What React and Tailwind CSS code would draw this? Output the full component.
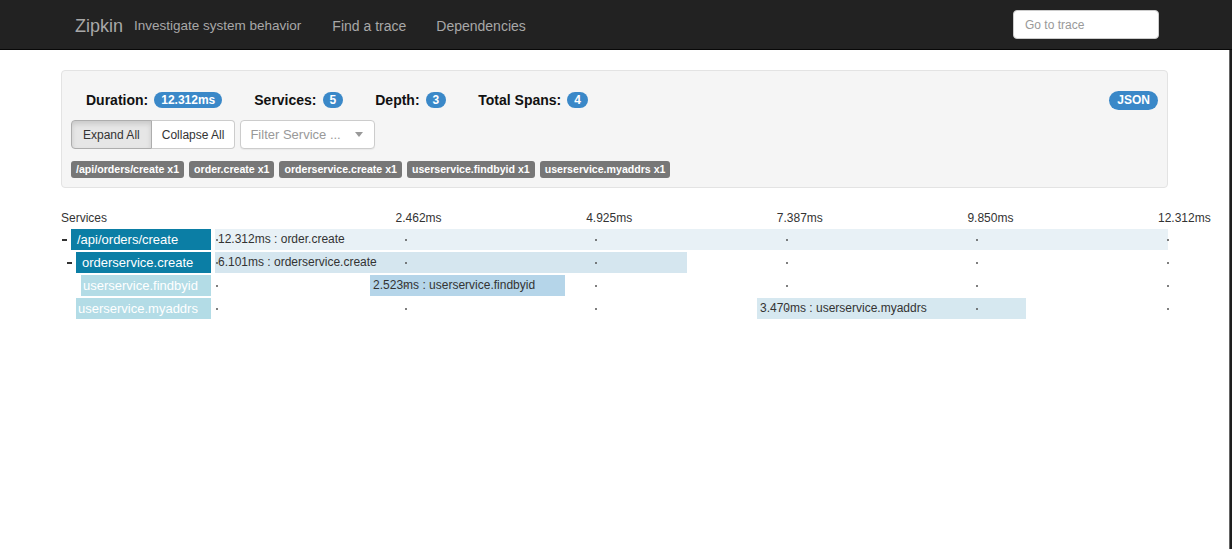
import React from "react";

const TICKS = [
  { pct: 20, label: "2.462ms" },
  { pct: 40, label: "4.925ms" },
  { pct: 60, label: "7.387ms" },
  { pct: 80, label: "9.850ms" },
  { pct: 100, label: "12.312ms" },
];

const SPANS = [
  {
    name: "/api/orders/create",
    label: "12.312ms : order.create",
    indent: "pl-[1px]",
    dash: true,
    dark: true,
    left: 0,
    width: 100,
    bar: "bg-[#e8f1f6]",
  },
  {
    name: "orderservice.create",
    label: "6.101ms : orderservice.create",
    indent: "pl-[6px]",
    dash: true,
    dark: true,
    left: 0,
    width: 49.55,
    bar: "bg-[#d5e6ef]",
  },
  {
    name: "userservice.findbyid",
    label: "2.523ms : userservice.findbyid",
    indent: "pl-[20px]",
    dash: false,
    dark: false,
    left: 16.27,
    width: 20.49,
    bar: "bg-[#b5d5e9]",
  },
  {
    name: "userservice.myaddrs",
    label: "3.470ms : userservice.myaddrs",
    indent: "pl-[15px]",
    dash: false,
    dark: false,
    left: 56.87,
    width: 28.18,
    bar: "bg-[#d6e8f0]",
  },
];

const TAGS = [
  "/api/orders/create x1",
  "order.create x1",
  "orderservice.create x1",
  "userservice.findbyid x1",
  "userservice.myaddrs x1",
];

function Badge({ children, className = "" }) {
  return (
    <span
      className={`inline-flex items-center justify-center rounded-full bg-[#3a88c8] text-white font-bold text-[12px] leading-none px-[7px] h-[16px] ${className}`}
    >
      {children}
    </span>
  );
}

function Stat({ label, value }) {
  return (
    <div className="flex items-center gap-[6px]">
      <span className="font-bold text-[14px] text-[#111]">{label}</span>
      <Badge>{value}</Badge>
    </div>
  );
}

function SpanRow({ span }) {
  return (
    <div className="flex h-[21px] mt-[2px] first:mt-0">
      {/* Service name */}
      <div className={`w-[150px] flex items-center ${span.indent}`}>
        {span.dash && <div className="w-[5px] h-[2px] bg-[#333] mr-[4px] shrink-0" />}
        <div
          className={`flex-1 h-full text-[13px] leading-[21px] text-white whitespace-nowrap overflow-hidden ${
            span.dark ? "bg-[#0b7ea5] pl-[6px]" : "bg-[#b3dce6] pl-[2px]"
          }`}
        >
          {span.name}
        </div>
      </div>

      {/* Track */}
      <div className="flex-1 ml-[4px] relative">
        <div
          className={`absolute top-0 bottom-0 ${span.bar}`}
          style={{ left: `${span.left}%`, width: `${span.width}%` }}
        >
          <span className="block pl-[3px] text-[12px] leading-[21px] text-[#333] whitespace-nowrap">
            {span.label}
          </span>
        </div>
        {[0, ...TICKS.map((t) => t.pct)].map((p) => (
          <div
            key={p}
            className="absolute top-[10px] w-[2px] h-[2px] rounded-full bg-[#555]"
            style={{ left: p === 0 ? "1px" : `calc(${p}% - 1px)` }}
          />
        ))}
      </div>
    </div>
  );
}

export default function App() {
  return (
    <div className="min-h-[549px] bg-white flex flex-col font-['Liberation_Sans',Arial,sans-serif] text-[#333]">
      {/* Navbar */}
      <nav className="h-[50px] bg-[#222] border-b border-[#080808] flex items-center pl-[75px] pr-[73px] shrink-0">
        <span className="text-[18px] text-[#a8a8a8] mt-[3px]">Zipkin</span>
        <span className="ml-[11px] text-[13.5px] text-[#a8a8a8] mt-[3px]">Investigate system behavior</span>
        <span className="ml-[31px] text-[14px] text-[#a8a8a8] mt-[3px]">Find a trace</span>
        <span className="ml-[30px] text-[14px] text-[#a8a8a8] mt-[3px]">Dependencies</span>
        <div className="ml-auto w-[146px] h-[29px] bg-white rounded-[4px] border border-[#ccc] flex items-center pl-[11px] text-[12px] text-[#999]">
          Go to trace
        </div>
      </nav>

      <div className="flex flex-1">
        <main className="flex-1 px-[61px] pt-[20px]">
          {/* Trace summary panel */}
          <div className="bg-[#f5f5f5] border border-[#e3e3e3] rounded-[4px] px-[9px] pt-[19px] pb-[9px]">
            <div className="flex items-center h-[20px]">
              <div className="flex items-center gap-[32px] pl-[15px]">
                <Stat label="Duration:" value="12.312ms" />
                <Stat label="Services:" value="5" />
                <Stat label="Depth:" value="3" />
                <Stat label="Total Spans:" value="4" />
              </div>
              <Badge className="ml-auto h-[19px] px-[8px] text-[12px]">JSON</Badge>
            </div>

            <div className="flex items-center mt-[10px] gap-[5px]">
              <div className="flex">
                <button className="h-[29px] px-[11px] text-[12px] text-[#333] bg-[#e6e6e6] border border-[#adadad] rounded-l-[4px] shadow-[inset_0_3px_5px_rgba(0,0,0,0.125)]">
                  Expand All
                </button>
                <button className="h-[29px] px-[10px] text-[12px] text-[#333] bg-white border border-l-0 border-[#ccc] rounded-r-[4px]">
                  Collapse All
                </button>
              </div>
              <div className="w-[135px] h-[29px] bg-white border border-[#ccc] rounded-[4px] flex items-center pl-[9px] pr-[11px] shadow-[0_1px_1px_rgba(0,0,0,0.05)]">
                <span className="text-[13px] text-[#999] whitespace-nowrap">Filter Service ...</span>
                <svg className="ml-auto" width="8" height="5" viewBox="0 0 8 5">
                  <path d="M0 0h8L4 5z" fill="#999" />
                </svg>
              </div>
            </div>

            <div className="flex items-center gap-[5px] mt-[12px]">
              {TAGS.map((t) => (
                <span
                  key={t}
                  className="h-[17px] px-[5px] rounded-[3px] bg-[#777] text-white font-bold text-[10.6px] leading-[17px] whitespace-nowrap"
                >
                  {t}
                </span>
              ))}
            </div>
          </div>

          {/* Timeline */}
          <div className="mt-[23px]">
            <div className="flex h-[15px] text-[12px] leading-[15px] text-[#333]">
              <div className="w-[150px]">Services</div>
              <div className="flex-1 ml-[4px] relative">
                {TICKS.map((t) => (
                  <span
                    key={t.label}
                    className="absolute top-0 whitespace-nowrap"
                    style={{ left: `calc(${t.pct}% - 10px)` }}
                  >
                    {t.label}
                  </span>
                ))}
              </div>
            </div>
            <div className="mt-[3px]">
              {SPANS.map((s) => (
                <SpanRow key={s.name} span={s} />
              ))}
            </div>
          </div>
        </main>
        <div className="w-[3px] bg-[#1e1e1e] border-l border-[#666] shrink-0" />
      </div>
    </div>
  );
}
